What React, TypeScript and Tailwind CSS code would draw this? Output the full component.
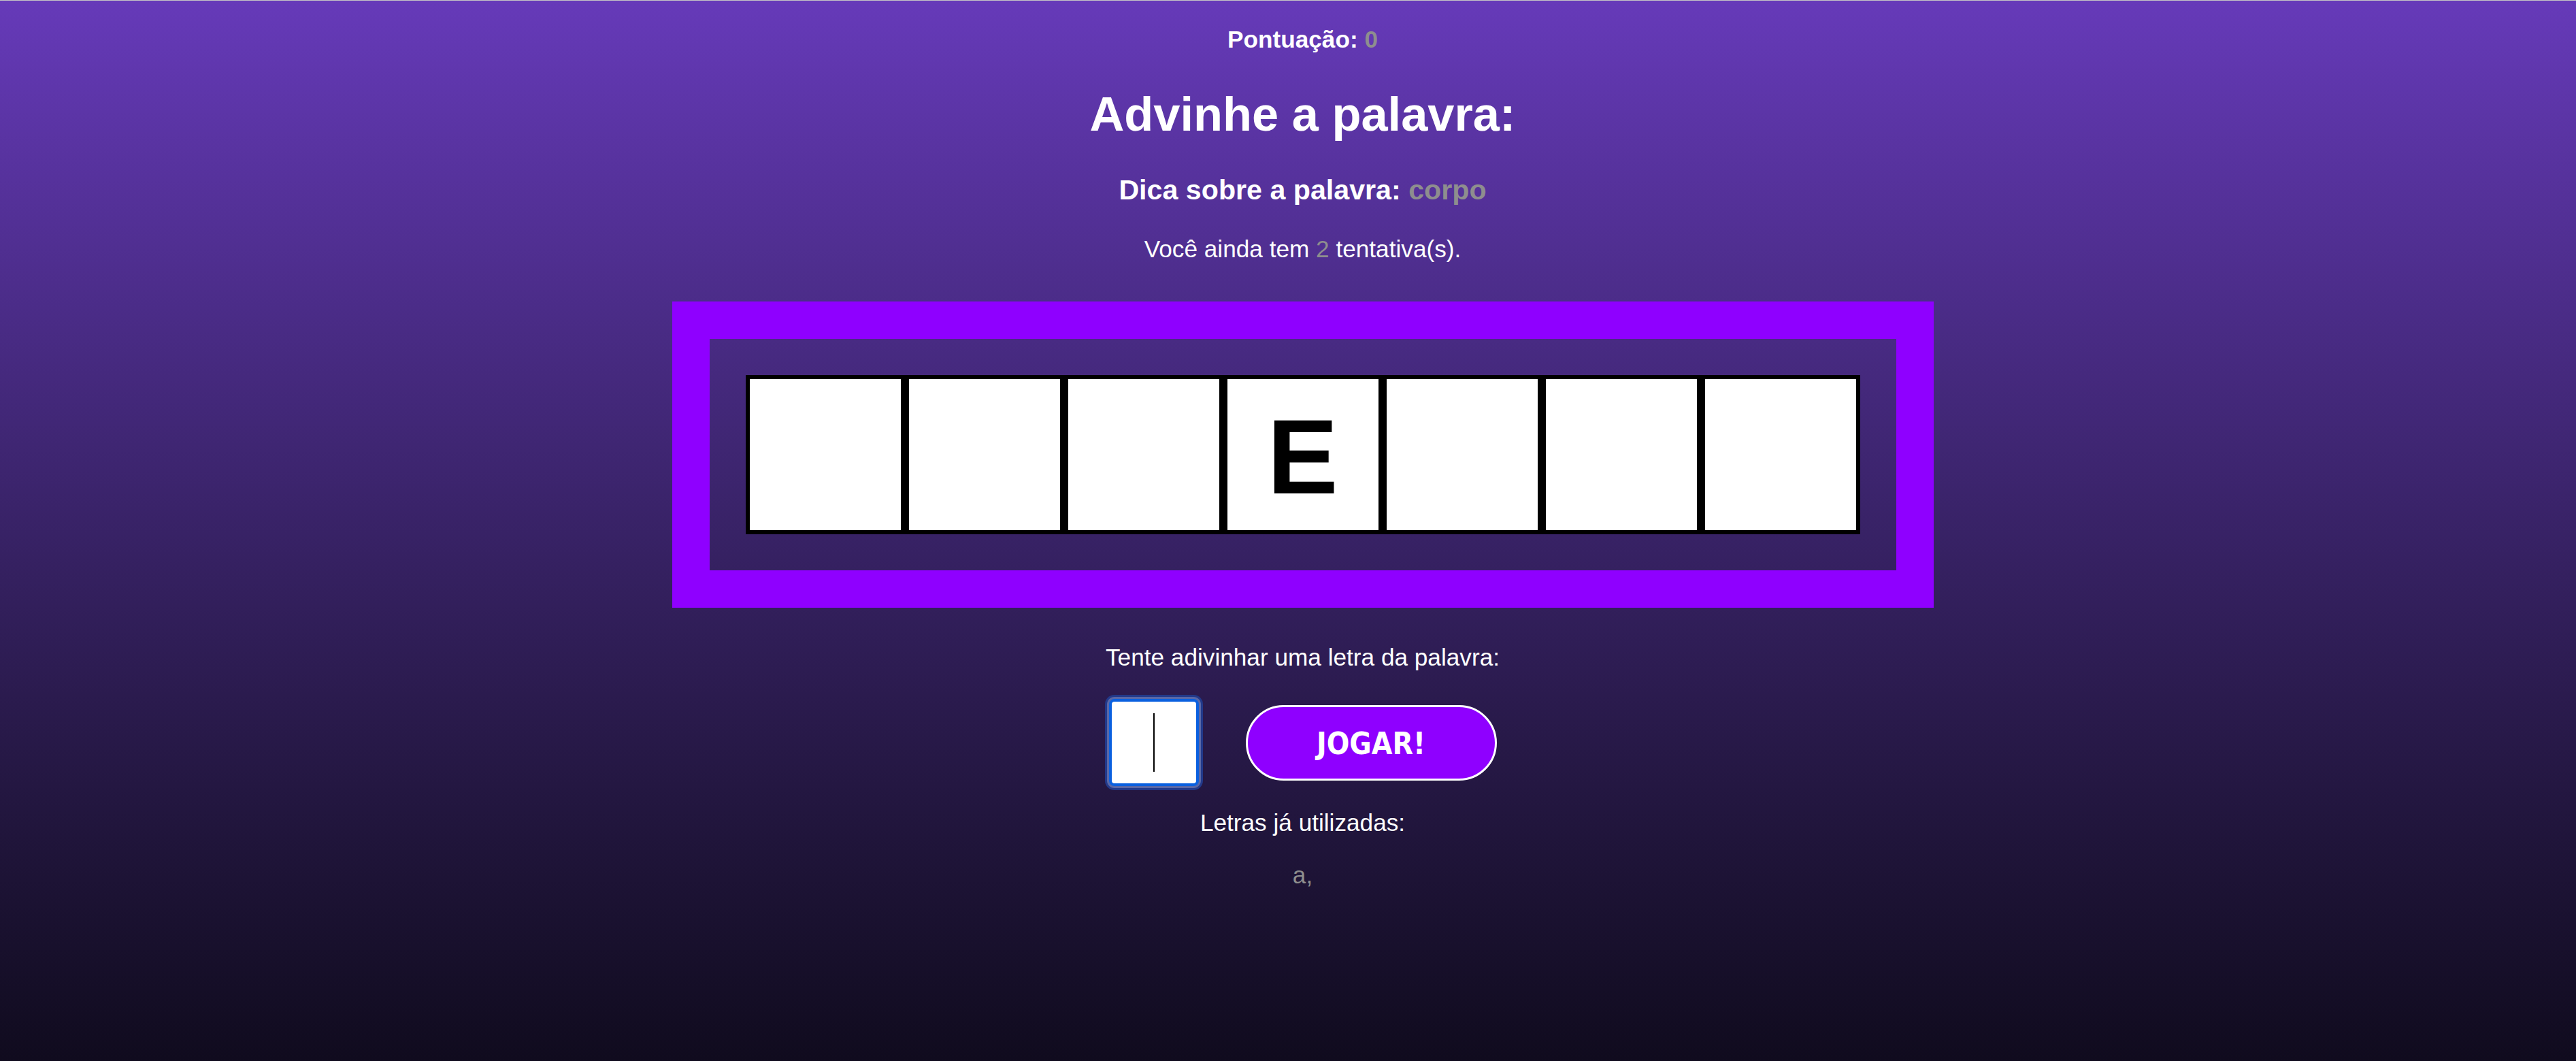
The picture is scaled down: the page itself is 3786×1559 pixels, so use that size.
const letters = ["", "", "", "E", "", "", ""];

const Tile = ({ letter }: { letter: string }) => {
  return (
    <div className="w-[234px] h-[234px] border-[6px] border-black bg-white flex items-center justify-center">
      <span className="pt-[6px] text-[156px] leading-none font-bold text-black">{letter}</span>
    </div>
  );
};

const App = () => {
  return (
    <div className="min-h-screen w-full border-t border-[#c6c6c6] bg-linear-to-b from-[#663ab9] to-[#100b1e] font-['Liberation_Sans',Arial,sans-serif] text-white flex flex-col items-center pl-[43px] pt-[39px]">
      <p className="text-[35.2px] leading-none font-bold">
        Pontuação: <span className="text-[#8e8e8e]">0</span>
      </p>

      <h1 className="mt-[58px] text-[70.4px] leading-none font-bold">Advinhe a palavra:</h1>

      <h3 className="mt-[55px] text-[41.2px] leading-none font-bold">
        Dica sobre a palavra: <span className="text-[#8e8e8e]">corpo</span>
      </h3>

      <p className="mt-[48px] text-[35.2px] leading-none">
        Você ainda tem <span className="text-[#8e8e8e]">2</span> tentativa(s).
      </p>

      <div className="mt-[60px] border-[55px] border-[#8f00ff] p-[53px]">
        <div className="flex">
          {letters.map((l, i) => (
            <Tile key={i} letter={l} />
          ))}
        </div>
      </div>

      <p className="mt-[55px] text-[35.2px] leading-none">Tente adivinhar uma letra da palavra:</p>

      <div className="mt-[44px] flex items-center gap-[69px]">
        <div className="w-[132px] h-[128px] border-[4px] border-[#0a60df] rounded-[8px] bg-white shadow-[0_0_0_3px_#5a68a6,0_0_0_6px_#22398a] flex items-center justify-center">
          <span className="w-[2px] h-[86px] bg-black" />
        </div>
        <button className="w-[369px] h-[111px] rounded-full border-[3px] border-white bg-[#8f00ff] pt-[3px] text-[44px] leading-none font-bold text-white font-['DejaVu_Sans_Condensed','DejaVu_Sans',sans-serif]">
          JOGAR!
        </button>
      </div>

      <p className="mt-[36px] text-[35.2px] leading-none">Letras já utilizadas:</p>

      <p className="mt-[42px] text-[35.2px] leading-none text-[#8e8e8e]">a,</p>
    </div>
  );
};

export default App;
